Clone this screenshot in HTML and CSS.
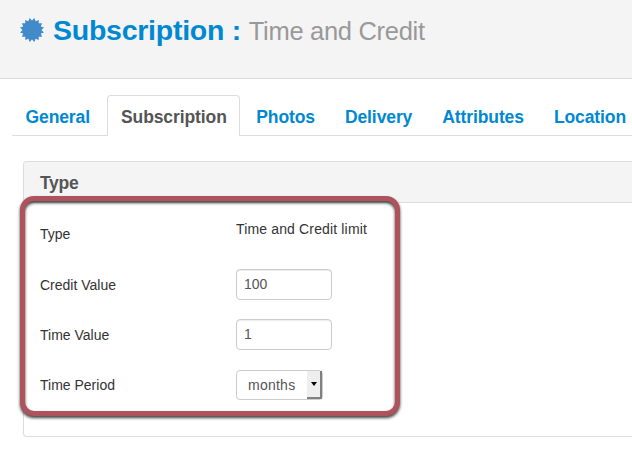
FILE: index.html
```html
<!DOCTYPE html>
<html lang="en">
<head>
    <meta charset="UTF-8">
    <meta name="viewport" content="width=device-width, initial-scale=1.0">
    <title>Subscription : Time and Credit</title>
    <link rel="stylesheet" href="styles.css">
</head>
<body>

    <!-- Page header -->
    <div class="page-header">
        <svg class="header-icon" viewBox="-13 -13 26 26">
            <path d="M9.5 0L12 2.4 8.8 3.6 10.1 6.8 6.7 6.7 6.8 10.1 3.6 8.8 2.4 12 0 9.5 -2.4 12 -3.6 8.8 -6.8 10.1 -6.7 6.7 -10.1 6.8 -8.8 3.6 -12 2.4 -9.5 0 -12 -2.4 -8.8 -3.6 -10.1 -6.8 -6.7 -6.7 -6.8 -10.1 -3.6 -8.8 -2.4 -12 0 -9.5 2.4 -12 3.6 -8.8 6.8 -10.1 6.7 -6.7 10.1 -6.8 8.8 -3.6 12 -2.4Z"/>
        </svg>
        <h1>Subscription : <small>Time and Credit</small></h1>
    </div>

    <!-- Tabs -->
    <ul class="tabs">
        <li><a href="#">General</a></li>
        <li class="active"><a href="#">Subscription</a></li>
        <li><a href="#">Photos</a></li>
        <li><a href="#">Delivery</a></li>
        <li><a href="#">Attributes</a></li>
        <li><a href="#">Location</a></li>
    </ul>

    <!-- Type box -->
    <div class="box">
        <div class="box-header">Type</div>
        <form class="box-content">
            <div class="form-row form-row-text">
                <label>Type</label>
                <span class="value">Time and Credit limit</span>
            </div>
            <div class="form-row">
                <label for="credit">Credit Value</label>
                <input type="text" id="credit" class="input-field" value="100">
            </div>
            <div class="form-row">
                <label for="time">Time Value</label>
                <input type="text" id="time" class="input-field" value="1">
            </div>
            <div class="form-row">
                <label>Time Period</label>
                <div class="select">
                    <span>months</span>
                    <div class="select-button"></div>
                </div>
            </div>
        </form>
        <div class="highlight"></div>
    </div>

</body>
</html>
```

FILE: styles.css
```css
* {
    box-sizing: border-box;
}
body {
    margin: 0;
    font-family: "Liberation Sans", Arial, sans-serif;
    font-size: 14px;
    color: #333;
    background: #fff;
}

/* Header */
.page-header {
    display: flex;
    align-items: flex-start;
    height: 79px;
    padding: 10px 0 0 19px;
    background: #f4f4f4;
    border-bottom: 1px solid #dcdcdc;
}
.header-icon {
    width: 26px;
    height: 26px;
    margin: 7px 8px 0 0;
    fill: #428bca;
}
h1 {
    margin: 0;
    font-size: 28.5px;
    line-height: 40px;
    color: #0088d2;
    letter-spacing: -0.25px;
    white-space: nowrap;
}
h1 small {
    font-size: 25.5px;
    font-weight: normal;
    color: #999;
    letter-spacing: -0.3px;
}

/* Tabs */
.tabs {
    display: flex;
    list-style: none;
    height: 41px;
    margin: 16px 0 0 12px;
    padding: 0;
    border-bottom: 1px solid #ddd;
}
.tabs li {
    height: 41px;
    padding: 0 13px;
    border: 1px solid transparent;
    border-bottom: none;
    margin-right: 2px;
}
.tabs li:first-child {
    padding: 0 14.5px 0 12.5px;
}
.tabs li:last-child {
    padding-right: 0;
    margin-right: 0;
}
.tabs a {
    font-size: 17.5px;
    font-weight: bold;
    line-height: 43px;
    letter-spacing: -0.1px;
    color: #0088d2;
    text-decoration: none;
}
.tabs .active {
    padding: 0 12.5px;
    background: #fff;
    border-color: #ddd;
    border-radius: 4px 4px 0 0;
}
.tabs .active a {
    color: #555;
}

/* Box */
.box {
    position: relative;
    height: 276px;
    margin: 25px 0 0 23px;
    border: 1px solid #ddd;
    border-right: none;
    border-radius: 4px 0 0 4px;
    box-shadow: 0 1px 2px rgba(0, 0, 0, 0.05);
}
.box-header {
    height: 41px;
    padding-left: 16px;
    font-size: 17.5px;
    font-weight: bold;
    line-height: 42px;
    letter-spacing: -0.3px;
    color: #555;
    background: #f4f4f4;
    border-bottom: 1px solid #ddd;
    border-radius: 3px 0 0 0;
}
.box-content {
    display: flex;
    flex-direction: column;
    gap: 19px;
    margin: 0;
    padding: 16px 16px 0;
}
.form-row {
    display: flex;
    height: 31px;
}
.form-row label {
    width: 196px;
    line-height: 32px;
    color: #333;
}
.form-row-text label {
    line-height: 30px;
}
.value {
    line-height: 20px;
    letter-spacing: 0.15px;
}
.input-field {
    width: 96px;
    height: 31px;
    padding: 3px 7px 5px;
    font-family: inherit;
    font-size: 14px;
    color: #555;
    border: 1px solid #ccc;
    border-radius: 4px;
    box-shadow: inset 0 1px 1px rgba(0, 0, 0, 0.075);
}
.select {
    display: flex;
    justify-content: space-between;
    width: 87px;
    height: 30px;
    margin-top: 1px;
    padding-left: 11px;
    line-height: 28px;
    color: #555;
    letter-spacing: 0.25px;
    border: 1px solid #ccc;
    border-radius: 4px;
}
.select-button {
    display: flex;
    align-items: center;
    justify-content: center;
    width: 15px;
    height: 28px;
    background: #eee;
    border-right: 2px solid #808080;
    border-bottom: 2px solid #808080;
}
.select-button::after {
    content: "";
    border: 3.5px solid transparent;
    border-top: 4px solid #000;
    border-bottom: none;
}

/* Outline around the form fields */
.highlight {
    position: absolute;
    top: 34px;
    left: -4px;
    width: 380px;
    height: 220px;
    border: 5px solid #ae525b;
    border-radius: 14px;
    filter: drop-shadow(0 2px 1.5px rgba(0, 0, 0, 0.75));
    pointer-events: none;
}
```
